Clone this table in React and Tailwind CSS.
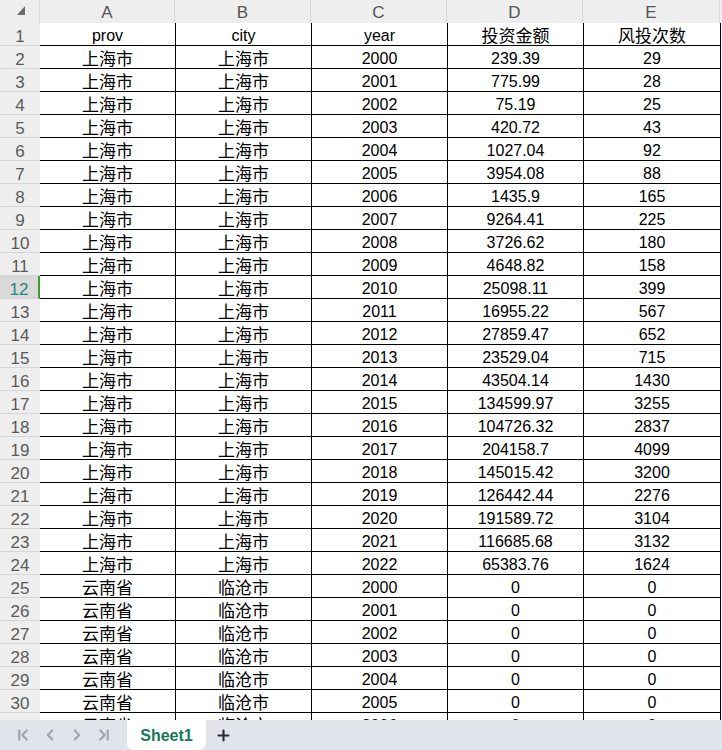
import React from "react";
import { ChevronFirst, ChevronLeft, ChevronRight, ChevronLast, Plus } from "lucide-react";
import clsx from "clsx";

const COLS = ["A", "B", "C", "D", "E"];

const SH = [
  ["239.39", "29"], ["775.99", "28"], ["75.19", "25"], ["420.72", "43"],
  ["1027.04", "92"], ["3954.08", "88"], ["1435.9", "165"], ["9264.41", "225"],
  ["3726.62", "180"], ["4648.82", "158"], ["25098.11", "399"], ["16955.22", "567"],
  ["27859.47", "652"], ["23529.04", "715"], ["43504.14", "1430"], ["134599.97", "3255"],
  ["104726.32", "2837"], ["204158.7", "4099"], ["145015.42", "3200"], ["126442.44", "2276"],
  ["191589.72", "3104"], ["116685.68", "3132"], ["65383.76", "1624"],
];

const rows = [
  ["prov", "city", "year", "投资金额", "风投次数"],
  ...SH.map(([amt, n], i) => ["上海市", "上海市", String(2000 + i), amt, n]),
  ...[0, 1, 2, 3, 4, 5, 6].map((i) => ["云南省", "临沧市", String(2000 + i), "0", "0"]),
];

const SELECTED = 12;
const cjk = (s) => /[\u4e00-\u9fff]/.test(s);

function Cell({ text, last }) {
  return (
    <div
      className={clsx(
        "h-full flex items-center justify-center pt-[4px] border-r border-b border-black text-black leading-none",
        last ? "w-[137px]" : "w-[136px]",
        cjk(text) ? "text-[17px]" : "text-[16px]"
      )}
    >
      {text}
    </div>
  );
}

export default function App() {
  return (
    <div
      className="w-[722px] h-[750px] flex flex-col bg-white overflow-hidden select-none"
      style={{ fontFamily: '"Liberation Sans", "Noto Sans CJK SC", sans-serif' }}
    >
      {/* column headers */}
      <div className="flex h-[23px] bg-[#eeeeee] shrink-0">
        <div className="w-[40px] flex items-start pl-[17px] pt-[6px] border-r border-[#dadada]">
          <svg width="8" height="9" viewBox="0 0 8 9">
            <polygon points="8,0 8,9 0,9" fill="#6b6b6b" />
          </svg>
        </div>
        {COLS.map((c, i) => (
          <div
            key={c}
            className={clsx(
              "flex items-center justify-center pt-[2px] border-r border-[#dadada] text-[17px] text-[#555]",
              i === 0 ? "w-[135px]" : i === 4 ? "w-[137px]" : "w-[136px]"
            )}
          >
            {c}
          </div>
        ))}
        <div className="flex-1" />
      </div>

      {/* body */}
      <div className="h-[697px] overflow-hidden shrink-0">
        {rows.map((r, i) => {
          const n = i + 1;
          const sel = n === SELECTED;
          return (
            <div key={n} className="flex h-[23px]">
              <div
                className={clsx(
                  "w-[40px] flex items-center justify-center pt-[4px] leading-none border-b border-[#d6d6d6] text-[17px]",
                  sel
                    ? "bg-[#d9d9d9] text-[#1d8a7d] border-r-2 border-r-[#3f9b2d]"
                    : "bg-[#eeeeee] text-[#5a5a5a]"
                )}
              >
                {n}
              </div>
              {r.map((t, j) => (
                <Cell key={j} text={t} last={j === 4} />
              ))}
              <div className="flex-1" />
            </div>
          );
        })}
      </div>

      {/* sheet tabs */}
      <div className="h-[30px] bg-[#e1e4eb] flex items-stretch shrink-0">
        <div className="flex items-center text-[#a3a5a9] pl-[14px] gap-[9px] w-[127px]">
          <ChevronFirst size={18} strokeWidth={3} />
          <ChevronLeft size={18} strokeWidth={3} />
          <ChevronRight size={18} strokeWidth={3} />
          <ChevronLast size={18} strokeWidth={3} />
        </div>
        <div className="w-[79px] bg-white rounded-b-[7px] flex items-center justify-center pt-[1px] text-[16px] font-bold text-[#137a57]">
          Sheet1
        </div>
        <div className="flex items-center pl-[9px] text-[#2c2c2c]">
          <Plus size={17} strokeWidth={3} />
        </div>
      </div>
    </div>
  );
}
